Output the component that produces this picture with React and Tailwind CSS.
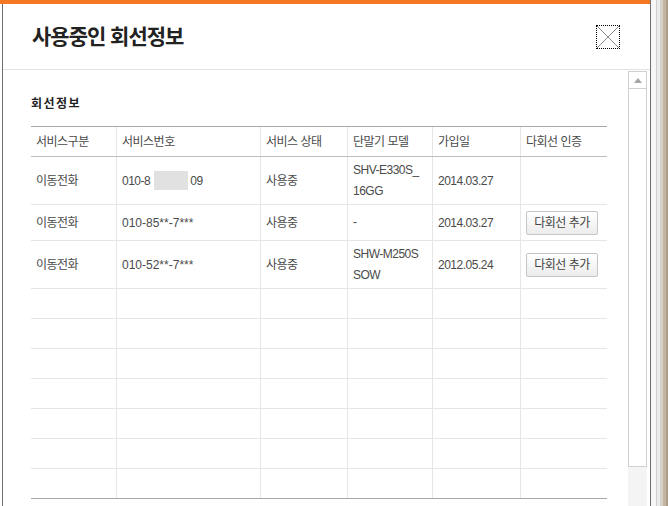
import React from "react";

const cols = "grid grid-cols-[85px_144px_87px_85px_88px_87px]";

const rows = [
  { kind: "이동전화", num: "masked", state: "사용중", model: ["SHV-E330S_", "16GG"], date: "2014.03.27", btn: false, h: "h-[48px]" },
  { kind: "이동전화", num: "010-85**-7***", state: "사용중", model: ["-"], date: "2014.03.27", btn: true, h: "h-[36px]" },
  { kind: "이동전화", num: "010-52**-7***", state: "사용중", model: ["SHW-M250S", "SOW"], date: "2012.05.24", btn: true, h: "h-[48px]" },
];

const Cell = ({ first, children }) => (
  <div className={`flex items-center px-[5px] ${first ? "" : "border-l border-[#e6e6e6]"}`}>
    {children}
  </div>
);

const AddButton = () => (
  <button className="h-[24px] w-[72px] rounded-[2px] border border-[#c6c6c6] bg-gradient-to-b from-white to-[#ececec] text-[12px] text-[#444]">
    다회선 추가
  </button>
);

const Number = ({ num }) =>
  num === "masked" ? (
    <span className="flex items-center">
      010-8
      <span className="ml-[4px] inline-block h-[19px] w-[34px] bg-[#e1e1e1]" />
      <span className="ml-[2px]">09</span>
    </span>
  ) : (
    <span className="tracking-[0px]">{num}</span>
  );

export default function App() {
  return (
    <div
      className="flex h-[506px] w-[668px] overflow-hidden bg-white text-[12px] tracking-[-0.5px] text-[#4a4a4a]"
      style={{ fontFamily: '"Liberation Sans", "Noto Sans CJK KR", sans-serif' }}
    >
      {/* dialog */}
      <div className="flex w-[651px] flex-col border-r border-[#6e6e6e]">
        <div className="h-[4px] bg-[#f47721]" />
        <div className="ml-[2px] flex flex-1 flex-col border-l border-[#6e6e6e]">
          {/* header */}
          <div className="flex h-[66px] items-center justify-between border-b border-[#e2e2e2] pl-[29px] pr-[30px]">
            <h1 className="text-[21px] font-semibold tracking-[-1px] text-[#222]">사용중인 회선정보</h1>
            <button className="h-[24px] w-[24px] border border-dotted border-black">
              <svg width="22" height="22" viewBox="0 0 22 22">
                <path d="M0 0 L22 22 M22 0 L0 22" stroke="#8a8a8a" strokeWidth="1" />
              </svg>
            </button>
          </div>

          {/* body */}
          <div className="flex flex-1">
            <div className="flex-1 pl-[28px] pr-[21px] pt-[26px]">
              <h2 className="mb-[14px] text-[12px] font-bold leading-[16px] tracking-[1.5px] text-[#222]">회선정보</h2>
              <div className="w-[576px] border-t border-[#a8a8a8]">
                <div className={`${cols} h-[30px] border-b border-[#bdbdbd]`}>
                  <Cell first>서비스구분</Cell>
                  <Cell>서비스번호</Cell>
                  <Cell>서비스 상태</Cell>
                  <Cell>단말기 모델</Cell>
                  <Cell>가입일</Cell>
                  <Cell>다회선 인증</Cell>
                </div>
                {rows.map((r, i) => (
                  <div key={i} className={`${cols} ${r.h} border-b border-[#e6e6e6]`}>
                    <Cell first>{r.kind}</Cell>
                    <Cell><Number num={r.num} /></Cell>
                    <Cell>{r.state}</Cell>
                    <Cell>
                      <div className="leading-[21px]">
                        {r.model.map((m) => (
                          <div key={m}>{m}</div>
                        ))}
                      </div>
                    </Cell>
                    <Cell>{r.date}</Cell>
                    <Cell>{r.btn && <AddButton />}</Cell>
                  </div>
                ))}
                {[0, 1, 2, 3, 4, 5, 6].map((i) => (
                  <div key={i} className={`${cols} h-[30px] border-b ${i === 6 ? "border-[#a8a8a8]" : "border-[#e6e6e6]"}`}>
                    <Cell first />
                    <Cell />
                    <Cell />
                    <Cell />
                    <Cell />
                    <Cell />
                  </div>
                ))}
              </div>
            </div>

            {/* scrollbar */}
            <div className="flex w-[19px] flex-col pt-[1px]">
              <div className="flex h-[18px] items-center justify-center border border-[#d0d0d0] bg-white">
                <svg width="8" height="5" viewBox="0 0 8 5">
                  <path d="M4 0 L8 5 L0 5 Z" fill="#a6a6a6" />
                </svg>
              </div>
              <div className="h-[378px] border border-t-0 border-[#d0d0d0] bg-white" />
              <div className="flex-1 bg-[#f4f4f4]" />
            </div>
            <div className="w-[3px]" />
          </div>
        </div>
      </div>

      {/* page behind */}
      <div className="flex flex-1">
        <div className="w-[5px] bg-[#f6f6f6]" />
        <div className="w-[1px] bg-[#cfcfcf]" />
        <div className="w-[3px] bg-[#ebebeb]" />
        <div className="w-[3px] bg-[#d6d1c7]" />
        <div className="w-[3px] bg-[#c2b6a2]" />
        <div className="flex-1 bg-[#ad9f88]" />
      </div>
    </div>
  );
}
